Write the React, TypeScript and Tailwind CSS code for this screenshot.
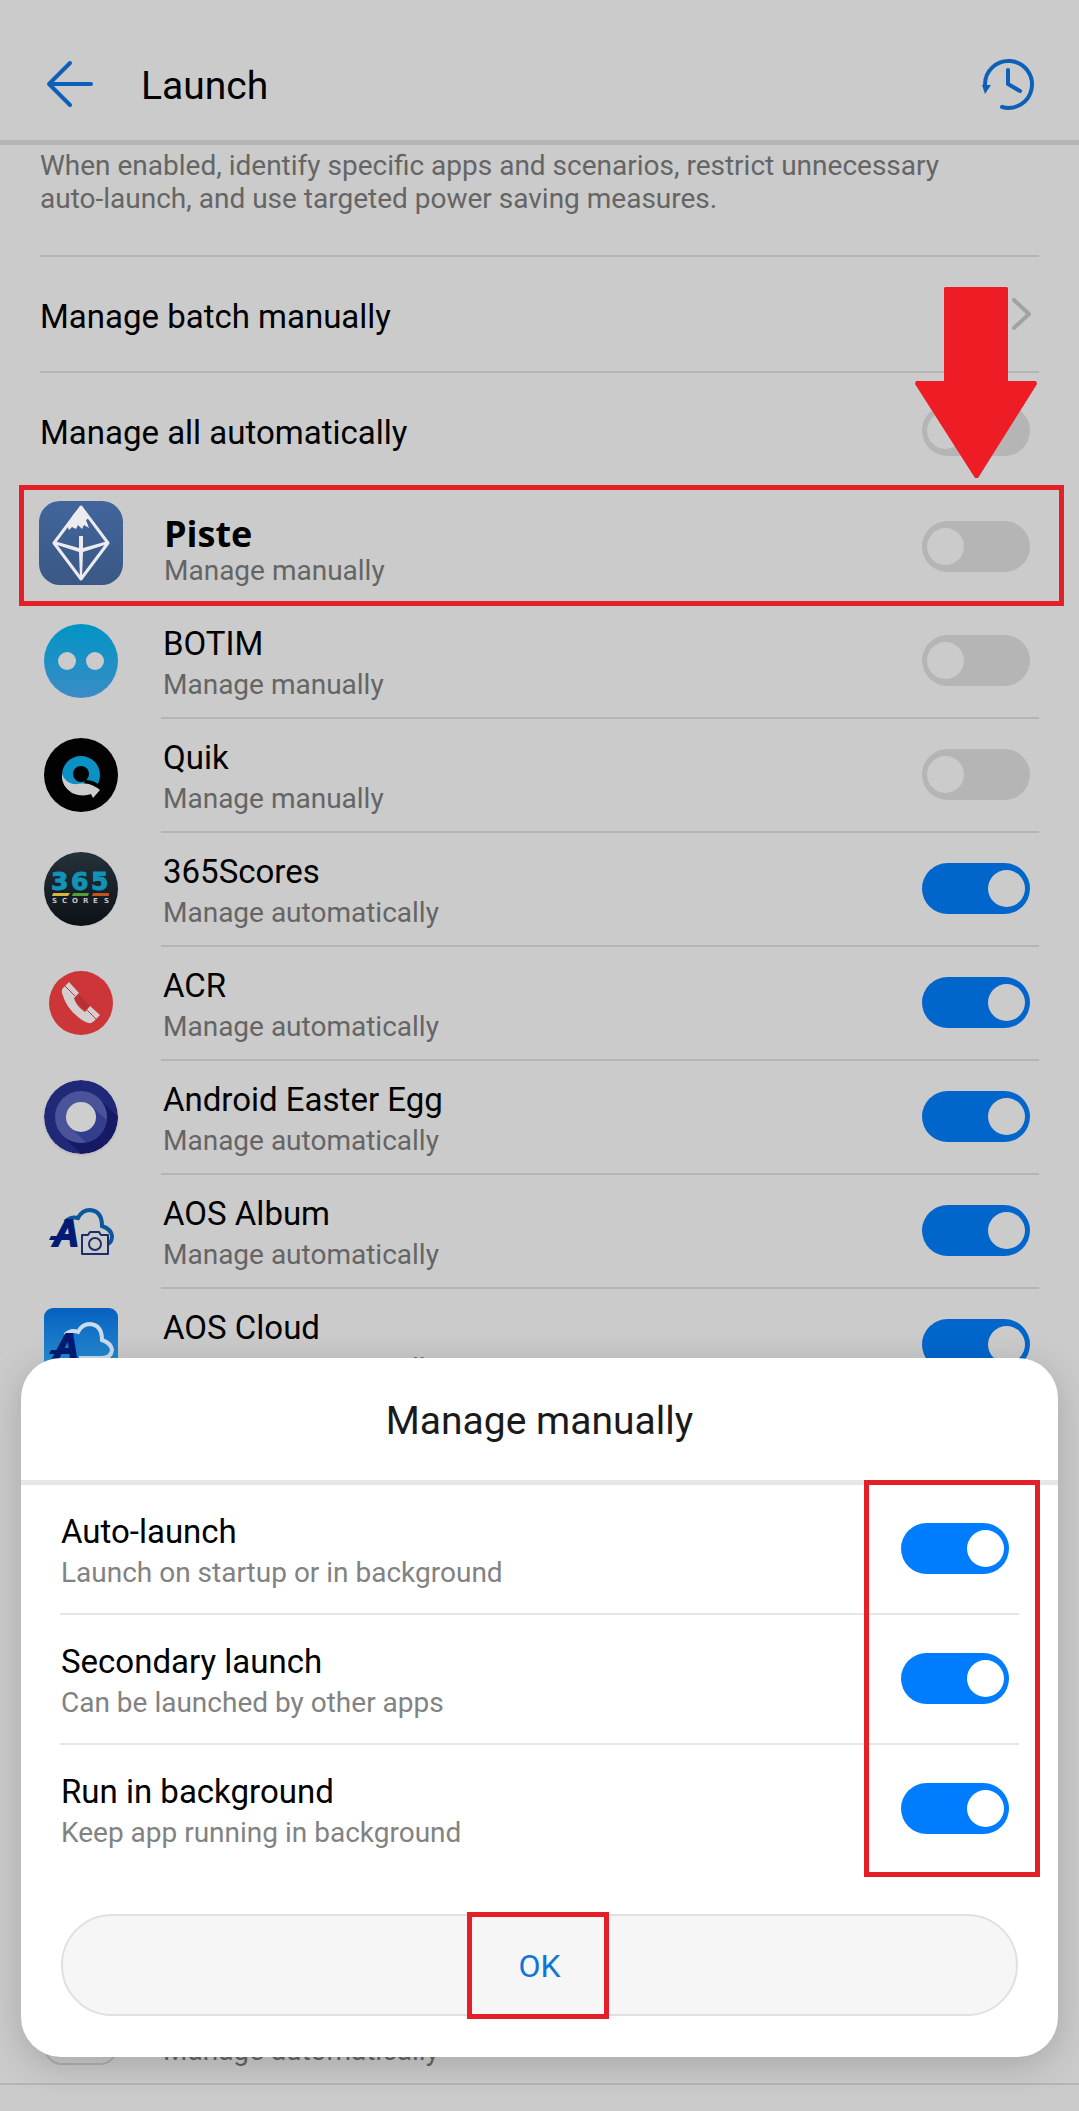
import type { ReactNode } from "react";

function Switch({ id, on, dimmed }: { id: string; on?: boolean; dimmed?: boolean }) {
    const colors = dimmed
        ? "bg-[#b5b5b5] checked:bg-[#0066cc] before:bg-[#cbcbcb]"
        : "bg-[#e3e3e3] checked:bg-[#007dff] before:bg-white";
    return (
        <input
            id={id}
            type="checkbox"
            role="switch"
            defaultChecked={on}
            className={`h-[51px] w-[108px] shrink-0 appearance-none rounded-full px-[5px] py-[7px] before:block before:size-[37px] before:rounded-full checked:before:ml-auto ${colors}`}
        />
    );
}

function PisteIcon() {
    return (
        <svg viewBox="0 0 84 84" className="mb-2 size-[84px]">
            <defs>
                <linearGradient id="piste-bg" x1="0" y1="0" x2="0" y2="1">
                    <stop offset="0" stopColor="#41659c" />
                    <stop offset="1" stopColor="#3b5884" />
                </linearGradient>
            </defs>
            <rect width="84" height="84" rx="21" fill="url(#piste-bg)" />
            <path d="M42 6 L69 42 L42 78 L15 42 Z" fill="none" stroke="#ececf0" strokeWidth="3" strokeLinejoin="round" />
            <path d="M42 5 L50 17 L47 19 L50 27 L45 24 L43 28 L39 24 L37 28 L33 26 L30 29 L28 25 L34 14 Z" fill="#ececf0" />
            <path d="M15 40 L40 47 L40 35 L44 35 L44 47 L69 40 L69 43 L44 51 L43 78 L41 78 L40 51 L15 43 Z" fill="#ececf0" />
        </svg>
    );
}

function BotimIcon() {
    return (
        <svg viewBox="0 0 74 74" className="size-[74px]">
            <defs>
                <linearGradient id="botim-bg" x1="0" y1="0" x2="0" y2="1">
                    <stop offset="0" stopColor="#0095c5" />
                    <stop offset="1" stopColor="#3b8cc6" />
                </linearGradient>
            </defs>
            <circle cx="37" cy="37" r="37" fill="url(#botim-bg)" />
            <circle cx="23" cy="37" r="9" fill="#cbcbcb" />
            <circle cx="51" cy="37" r="9" fill="#cbcbcb" />
        </svg>
    );
}

function QuikIcon() {
    return (
        <svg viewBox="0 0 74 74" className="size-[74px]">
            <circle cx="37" cy="37" r="37" fill="#020202" />
            <circle cx="37" cy="37" r="19" fill="#0a92c4" />
            <path d="M41 42 Q49 42 54 46 L60 48 V62 H36 Z" fill="#020202" />
            <path d="M18 36 Q21 44 29 46 C36 47 43 42 56 52 L49 60 L47 56 C42 58 34 58 28 55 Q17 48 18 36 Z" fill="#cdcdcd" />
            <circle cx="37" cy="36" r="8" fill="#020202" />
        </svg>
    );
}

function ScoresIcon() {
    return (
        <svg viewBox="0 0 74 74" className="size-[74px]">
            <defs>
                <linearGradient id="scores-bg" x1="0" y1="0" x2="0" y2="1">
                    <stop offset="0" stopColor="#25313a" />
                    <stop offset="1" stopColor="#0c1116" />
                </linearGradient>
            </defs>
            <circle cx="37" cy="37" r="37" fill="url(#scores-bg)" />
            <text x="7 27 47" y="38" fontSize="25" fontWeight="700" fontFamily="'DejaVu Sans', sans-serif" fill="#1193b8" stroke="#1193b8" strokeWidth="1">365</text>
            <path d="M9 41 H26 L24 44 H8 Z" fill="#d6b53c" />
            <path d="M29 41 H45 L44 44 H28 Z" fill="#559d35" />
            <path d="M49 41 H65 L65 44 H48 Z" fill="#c4521f" />
            <text x="8 18 28 39 49 60" y="51" fontSize="7" fontWeight="700" fontFamily="'DejaVu Sans', sans-serif" fill="#c3c3c3">SCORES</text>
        </svg>
    );
}

function AcrIcon() {
    return (
        <svg viewBox="0 0 74 74" className="size-[74px]">
            <circle cx="37" cy="37" r="32" fill="#cc3638" />
            <path d="M34 27 L46 40 L42 46 L30 33 Z" fill="#b83034" />
            <path d="M25 16 L35 27 L30 32 Q32 40 41 46 L46 40 L56 49 L49 56 Q45 59 38 54 Q22 43 18 27 Q17 23 20 21 Z" fill="#d3cfd0" />
            <path d="M21 20 L31 30 M43 44 L52 53" stroke="#cc3638" strokeWidth="1" />
        </svg>
    );
}

function EasterEggIcon() {
    return (
        <svg viewBox="0 0 74 74" className="size-[74px] rounded-full shadow-sm">
            <defs>
                <clipPath id="egg-outer">
                    <circle cx="37" cy="37" r="37" />
                </clipPath>
                <clipPath id="egg-inner">
                    <circle cx="37" cy="37" r="26" />
                </clipPath>
            </defs>
            <circle cx="37" cy="37" r="37" fill="#202878" />
            <path d="M55 18 L74 37 L74 74 L37 74 L18 55 Z" fill="#161a64" clipPath="url(#egg-outer)" />
            <circle cx="37" cy="37" r="26" fill="#4b539b" />
            <path d="M47 26 L74 50 L60 74 L50 70 L26 47 Z" fill="#343e8f" clipPath="url(#egg-inner)" />
            <circle cx="37" cy="37" r="15" fill="#cecece" />
        </svg>
    );
}

function AosLetter() {
    return (
        <g fill="#001b73">
            <text x="9" y="52" fontSize="36" fontWeight="700" fontStyle="italic" fontFamily="'Liberation Sans', sans-serif" stroke="#001b73" strokeWidth="2">A</text>
            <path d="M7 42 H28 V46 H5 Z" />
        </g>
    );
}

function AosAlbumIcon() {
    return (
        <svg viewBox="0 0 74 74" className="size-[74px]">
            <path d="M21 28 Q27 22 34 24 Q38 16 46 16 Q58 17 58 32 Q67 35 68 42 Q68 48 64 50" fill="none" stroke="#0a57a0" strokeWidth="4" />
            <AosLetter />
            <path d="M38 41 H44 L46 38 H55 L57 41 H64 V60 H38 Z" fill="#cbcbcb" stroke="#1b2d6c" strokeWidth="2" strokeLinejoin="round" />
            <circle cx="51" cy="50" r="6" fill="none" stroke="#1b2d6c" strokeWidth="2" />
        </svg>
    );
}

function AosCloudIcon() {
    return (
        <svg viewBox="0 0 74 74" className="size-[74px]">
            <defs>
                <linearGradient id="aos-cloud-bg" x1="0" y1="0" x2="0" y2="1">
                    <stop offset="0" stopColor="#0660bf" />
                    <stop offset="1" stopColor="#319bd8" />
                </linearGradient>
            </defs>
            <rect width="74" height="74" rx="9" fill="url(#aos-cloud-bg)" />
            <path d="M21 27 Q27 21 34 24 Q38 16 46 16 Q58 17 58 32 Q67 35 68 42 Q67 50 58 50 H35" fill="none" stroke="#cddcec" strokeWidth="4" />
            <AosLetter />
        </svg>
    );
}

function BlankIcon() {
    return <div className="size-[74px] rounded-[18px] border-2 border-[#b0b0b0]" />;
}

const apps = [
    { id: "botim", name: "BOTIM", on: false, icon: <BotimIcon /> },
    { id: "quik", name: "Quik", on: false, icon: <QuikIcon /> },
    { id: "scores365", name: "365Scores", on: true, icon: <ScoresIcon /> },
    { id: "acr", name: "ACR", on: true, icon: <AcrIcon /> },
    { id: "easter-egg", name: "Android Easter Egg", on: true, icon: <EasterEggIcon /> },
    { id: "aos-album", name: "AOS Album", on: true, icon: <AosAlbumIcon /> },
    { id: "aos-cloud", name: "AOS Cloud", on: true, icon: <AosCloudIcon /> },
];

const options = [
    { id: "auto-launch", title: "Auto-launch", text: "Launch on startup or in background" },
    { id: "secondary-launch", title: "Secondary launch", text: "Can be launched by other apps" },
    { id: "run-background", title: "Run in background", text: "Keep app running in background" },
];

function AppRow({ id, name, on, icon }: { id: string; name: string; on: boolean; icon: ReactNode }) {
    return (
        <li className="flex h-[114px] shrink-0 pl-11">
            <div className="flex w-[117px] items-center pb-0.5">{icon}</div>
            <div className="mr-10 flex flex-1 items-center justify-between border-b-2 border-[#b5b5b5] pr-[9px] pb-px pl-0.5">
                <label htmlFor={id} className="flex flex-col pt-[5px]">
                    <span className="text-[33px] leading-[42px]">{name}</span>
                    <span className="text-[28px] leading-[39px] text-[#656565]">{on ? "Manage automatically" : "Manage manually"}</span>
                </label>
                <Switch id={id} on={on} dimmed />
            </div>
        </li>
    );
}

export default function App() {
    return (
        <div className="relative flex min-h-screen flex-col overflow-hidden bg-[#cbcbcb] font-['Roboto',sans-serif] text-black">
            <header className="flex h-[145px] items-center border-b-[5px] border-[#b5b5b5] pt-7 pr-[44px] pl-[46px]">
                <button type="button" aria-label="Back">
                    <svg viewBox="0 0 48 48" className="size-12" fill="none" stroke="#0d60b8" strokeWidth="4" strokeLinecap="round" strokeLinejoin="round">
                        <path d="M24 3 L3 24 L24 45 M3 24 H45" />
                    </svg>
                </button>
                <h1 className="ml-[47px] flex-1 pt-1 text-[39px] leading-[46px]">Launch</h1>
                <button type="button" aria-label="History">
                    <svg viewBox="0 0 54 54" className="size-[54px]" fill="none" stroke="#0d60b8" strokeWidth="4" strokeLinecap="round" strokeLinejoin="round">
                        <path d="M21 50 A23.500 23.500 0 1 0 4 28" />
                        <path d="M27 13 V27 L39 34" />
                        <path d="M1 28 H10 L4 37 Z" fill="#0d60b8" stroke="none" />
                    </svg>
                </button>
            </header>

            <p className="mx-10 h-[112px] border-b-2 border-[#b5b5b5] pt-1 pr-20 text-[28px] leading-[33px] text-[#656565]">
                When enabled, identify specific apps and scenarios, restrict unnecessary auto-launch, and use targeted power saving measures.
            </p>
            <a href="#batch" className="mx-10 flex h-[116px] items-center justify-between border-b-2 border-[#b5b5b5] pr-1.5 text-[33px]">
                <span className="pt-1.5">Manage batch manually</span>
                <svg viewBox="0 0 22 36" className="h-9 w-[22px]" fill="none" stroke="#a2a2a2" strokeWidth="4" strokeLinecap="round" strokeLinejoin="round">
                    <path d="M3 4 L18 18 L3 32" />
                </svg>
            </a>
            <div className="mx-10 flex h-[116px] items-center justify-between pr-[9px] pb-px">
                <label htmlFor="manage-all" className="pt-1 text-[33px]">Manage all automatically</label>
                <Switch id="manage-all" dimmed />
            </div>

            <ul className="flex flex-1 flex-col">
                <li className="relative flex h-[116px] items-center pr-[49px] pb-px pl-[39px]">
                    <PisteIcon />
                    <label htmlFor="piste" className="ml-10 flex flex-1 flex-col pt-1.5 pl-px">
                        <span className="font-['Open_Sans',sans-serif] text-[36px] leading-[42px] font-bold">Piste</span>
                        <span className="text-[28px] leading-8 text-[#656565]">Manage manually</span>
                    </label>
                    <Switch id="piste" dimmed />
                    {/* callout frame and the arrow above it */}
                    <div className="pointer-events-none absolute -top-1 -bottom-px right-[15px] left-[19px] border-[5px] border-[#e51f28]">
                        <svg viewBox="0 0 122 192" className="absolute right-[22px] bottom-full mb-[11px] h-48 w-[122px]" fill="#ee1c24">
                            <path d="M30 0 H92 L93 1 V94 H121 L122 97 L63 191 L60 191 L0 97 L1 94 H29 V1 Z" />
                        </svg>
                    </div>
                </li>
                {apps.map((app) => (
                    <AppRow key={app.id} {...app} />
                ))}
                <li className="mt-auto flex h-[110px] items-center pr-[49px] pl-11">
                    <BlankIcon />
                    <label htmlFor="last-app" className="mt-[46px] ml-[45px] flex-1 text-[28px] leading-9 text-[#656565]">Manage automatically</label>
                    <Switch id="last-app" on dimmed />
                </li>
            </ul>
            <footer className="h-7 border-t-2 border-[#b5b5b5]" />

            <section role="dialog" aria-labelledby="dialog-title" className="absolute inset-x-[21px] bottom-[54px] rounded-[40px] bg-white pb-[41px] shadow-[0_8px_36px_rgba(0,0,0,0.18)]">
                <h2 id="dialog-title" className="flex h-[127px] items-center justify-center border-b-[5px] border-[#e6e6e6] pt-1 text-[39px] text-[#1a1a1a]">
                    Manage manually
                </h2>
                <div className="relative px-[39px]">
                    {options.map((option) => (
                        <div key={option.id} className="flex h-[130px] items-center justify-between border-b-2 border-[#e6e6e6] pr-[10px] pb-px pl-px last-of-type:border-transparent">
                            <label htmlFor={option.id} className="flex flex-col pt-[5px]">
                                <span className="text-[33px] leading-[42px]">{option.title}</span>
                                <span className="text-[28px] leading-[39px] text-[#828282]">{option.text}</span>
                            </label>
                            <Switch id={option.id} on />
                        </div>
                    ))}
                    <span className="pointer-events-none absolute -top-[5px] -bottom-0.5 right-[18px] w-44 border-[5px] border-[#e51f28]" />
                </div>
                <div className="relative mx-10 mt-[39px]">
                    <button type="button" className="h-[102px] w-full rounded-full border-2 border-[#e0e0e0] bg-[#f6f6f6] pt-0.5 text-[32px] text-[#0f75d6]">
                        OK
                    </button>
                    <span className="pointer-events-none absolute -top-0.5 left-[calc(50%-73px)] h-[107px] w-[142px] border-[5px] border-[#e51f28]" />
                </div>
            </section>
        </div>
    );
}
